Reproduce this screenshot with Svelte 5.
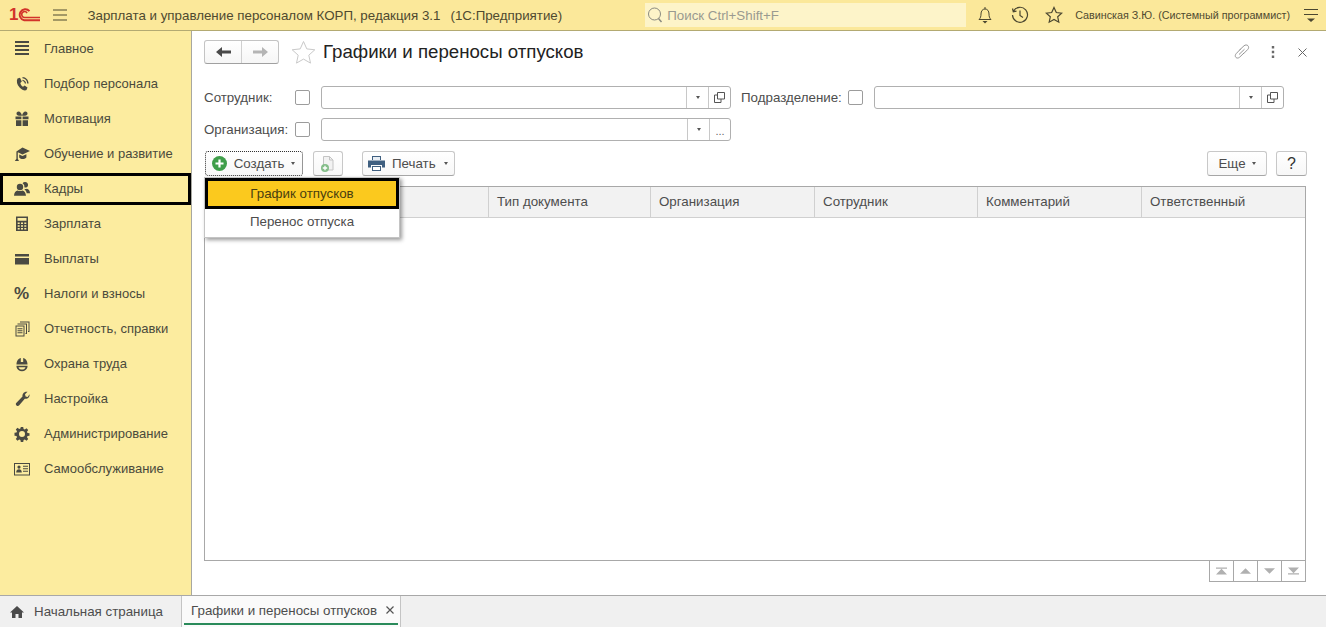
<script>
  const nav = [
    { label: 'Главное', d: 'M1 0h14v2H1zM1 4h14v2H1zM1 8h14v2H1zM1 12h14v2H1z' },
    { label: 'Подбор персонала', d: 'M3.500 2.500L6 1.700 7.800 5.400 6.300 6.900c.4 1.700 1.300 3 2.800 3.900L10.500 9.400l3 2.200-1 2.500c-1.600.9-4.300.2-6.900-2.500C2.900 8.800 2.200 5 3.500 2.500zM8.500 1c3.500.2 5.900 2.800 6.100 6.400h-1.400c-.2-2.900-2-4.900-4.700-5.100zM8.500 3.800c2 .2 3.400 1.700 3.600 3.800h-1.300c-.2-1.400-1-2.400-2.300-2.500z' },
    { label: 'Мотивация', d: 'M1.500 5.500h5.900v2.800H1.500zM8.600 5.500h5.900v2.800H8.600zM2 9.200h5.400V15H2zM8.600 9.200H14V15H8.600zM4.500.500C6.200.500 7.500 2.300 8 4.700c.5-2.400 1.800-4.200 3.500-4.200 1.400 0 2 1 2 2 0 1.300-1 2.200-2.500 2.200H5c-1.500 0-2.500-.9-2.500-2.200 0-1 .6-2 2-2z' },
    { label: 'Обучение и развитие', d: 'M8.500 1.500L16 5l-7.500 3.500L3.800 6.300v6.400L5 15H.8l1.600-2.300V5.500zM5.200 8.500l3.300 1.600 3.900-1.800v3.200c-2.300 2.100-5.200 2.100-7.200 0z' },
    { label: 'Кадры', d: 'M6 2.800a3.200 3.200 0 1 1 0 6.400 3.200 3.200 0 0 1 0-6.400zM11.200 1a2.800 2.800 0 1 1-.7 5.500 4.600 4.600 0 0 0-1.900-4.200A2.800 2.800 0 0 1 11.200 1zM0 14.800c0-3.200 1.800-5 3.700-5.300 1.500.8 3.100.8 4.600 0 1.900.3 3.500 2.100 3.700 5.300zM10 7.800c1 .3 1.900.2 2.900-.1 1.800.4 3.100 2 3.100 4.600h-3.300c-.4-2-1.300-3.400-2.700-4.500z' },
    { label: 'Зарплата', d: 'M2 .500h12V15H2zM3.500 2v2.800h9V2zM3.700 6.500v1.600h2V6.500zM7 6.500v1.600h2V6.500zM10.300 6.500v1.600h2V6.500zM3.700 9.200v1.600h2V9.200zM7 9.200v1.600h2V9.200zM10.300 9.200v1.600h2V9.200zM3.700 11.900v1.600h2v-1.600zM7 11.900v1.600h2v-1.600zM10.300 11.900v1.600h2v-1.600z' },
    { label: 'Выплаты', d: 'M1 3h14v2.600H1zM1 7h14v6.500H1z' },
    { label: 'Налоги и взносы', pct: true },
    { label: 'Отчетность, справки', d: 'M1.500 4.500h9V15.500h-9zM2.500 5.500v9h7v-9zM3.500 7.300h5v1h-5zM3.500 9.300h5v1h-5zM3.500 11.300h5v1h-5zM3.500 2.500h9.500v10.500h-1.500v-1h.5V3.500H3.500zM6 .500h9.500V11h-1.500v-1h.5V1.500H6z' },
    { label: 'Охрана труда', d: 'M2.500 8.500C2.500 4.800 4.500 2.300 6.800 1.900V6h2.400V1.900c2.300.4 4.300 2.900 4.300 6.600zM2.500 9.800h11V11c-.6 2.600-2.700 4.300-5.500 4.300S3.100 13.600 2.500 11zM4.500 11.200c.4 1.400 1.800 2.400 3.500 2.400s3.100-1 3.500-2.400z' },
    { label: 'Настройка', d: 'M15.500 3.200c.5 2.700-1.700 5-4.700 4.500L5 14.500c-1.400 1.500-4.200-.9-2.800-2.600L8.500 5.500C8 2.600 10.500.1 13.500.8L11 3.300l.6 2.200 2.100.4z' },
    { label: 'Администрирование', d: 'M6.800 1h2.400l.4 2 1.200.5 1.700-1.200 1.700 1.700-1.200 1.700.5 1.200 2 .4v2.400l-2 .4-.5 1.200 1.200 1.700-1.700 1.700-1.700-1.200-1.200.5-.4 2H6.800l-.4-2-1.200-.5-1.700 1.200-1.700-1.700 1.200-1.700-.5-1.200-2-.4V6.800l2-.4.5-1.200-1.200-1.700 1.700-1.700 1.700 1.200 1.200-.5zM8 5a3 3 0 1 0 0 6 3 3 0 0 0 0-6z' },
    { label: 'Самообслуживание', d: 'M0 2h16v12.500H0zM1 3v10.500h14V3zM5 4.500a1.600 1.600 0 1 1 0 3.200 1.600 1.600 0 0 1 0-3.200zM2.200 11.500c0-2 1.200-3.200 2.800-3.200s2.800 1.200 2.800 3.200zM9 4.800h5v1H9zM9 7.300h5v1H9zM9 9.800h5v1H9z' }
  ];
  const cols = ['', 'Тип документа', 'Организация', 'Сотрудник', 'Комментарий', 'Ответственный'];
</script>

<div class="app">
  <header class="top">
    <span class="logo1">1</span>
    <svg class="logo" width="22" height="16" viewBox="0 0 23 16">
      <path d="M12 4A5.800 5.800 0 1 0 6.500 13.500H23" fill="none" stroke="#d2332a" stroke-width="2" />
      <path d="M9.500 6A3 3 0 1 0 7 10.500H23" fill="none" stroke="#d2332a" stroke-width="1.600" />
    </svg>
    <svg class="burger" width="14" height="12" viewBox="0 0 14 12"><path d="M0 1h14M0 6h14M0 11h14" stroke="#4f4a30" fill="none" /></svg>
    <span class="apptitle">Зарплата и управление персоналом КОРП, редакция 3.1</span>
    <span class="appname">(1С:Предприятие)</span>
    <div class="search">
      <svg width="16" height="18" viewBox="0 0 16 18"><circle cx="7.500" cy="8" r="6" fill="none" stroke="#8a8a80" /><path d="M11.500 12.500l3 3.500" stroke="#8a8a80" stroke-width="1.500" /></svg>
      <span>Поиск Ctrl+Shift+F</span>
    </div>
    <svg class="tool bell" width="16" height="18" viewBox="0 0 16 18"><path d="M2 13.500c1.500-1.500 2-3 2-5.500 0-3 1.500-5 4-5s4 2 4 5c0 2.500.5 4 2 5.500zM8 1v2" fill="none" stroke="#4a4630" /><path d="M5.500 15h5L8 17.500z" fill="#4a4630" /></svg>
    <svg class="tool hist" width="18" height="18" viewBox="0 0 18 18"><path d="M2.500 5A7.500 7.500 0 1 1 1.500 9M1.500 2.500l.8 3.200 3.200-.6M9 4.500V9.500l3 2" fill="none" stroke="#4a4630" stroke-width="1.200" /></svg>
    <svg class="tool fav" width="18" height="18" viewBox="0 0 18 18"><path d="M9 1.500l2.300 5 5.400.6-4 3.700 1.100 5.400L9 13.500l-4.800 2.700 1.100-5.400-4-3.700 5.400-.6z" fill="none" stroke="#4a4630" stroke-width="1.200" /></svg>
    <span class="user">Савинская З.Ю. (Системный программист)</span>
    <svg class="usermenu" width="14" height="16" viewBox="0 0 14 16"><path d="M0 2.500h14M0 7.500h14" stroke="#4a4630" /><path d="M3 11.500h8L7 15z" fill="#4a4630" /></svg>
  </header>

  <div class="middle">
    <nav class="side">
      {#each nav as n}
        <div class="item" class:current={n.label === 'Кадры'}>
          <span class="ico">
            {#if n.pct}
              <span class="pct">%</span>
            {:else}
              <svg width="16" height="16" viewBox="0 0 16 16"><path d={n.d} fill="#4a4a42" fill-rule="evenodd" /></svg>
            {/if}
          </span>
          <span>{n.label}</span>
        </div>
      {/each}
    </nav>

    <main class="content">
      <div class="titlebar">
        <div class="navbtns">
          <span class="nb">
            <svg width="15" height="10" viewBox="0 0 15 10"><path d="M0 5l6-5v3.500h9v3H6V10z" fill="#4a4a4a" /></svg>
          </span>
          <span class="nb">
            <svg width="15" height="10" viewBox="0 0 15 10"><path d="M15 5L9 0v3.500H0v3h9V10z" fill="#b5b5b5" /></svg>
          </span>
        </div>
        <svg class="star" width="25" height="25" viewBox="0 0 25 25"><path d="M12.500 1.500l3.300 7.400 8 .9-6 5.400 1.700 7.900-7-4-7 4 1.700-7.900-6-5.400 8-.9z" fill="none" stroke="#c9c9c9" /></svg>
        <h1>Графики и переносы отпусков</h1>
        <div class="winbtns">
          <svg class="link" width="16" height="16" viewBox="0 0 16 16"><path d="M5.500 6L10 1.800c1.300-1.200 3.200-1 4 0 .9 1 .8 2.600-.3 3.700L9.200 10M10.500 5.200L5 10.500M6.800 4.800L2.300 9.500c-1.300 1.300-1.300 3-.4 3.900.9.900 2.500.9 3.700-.2L10 9" fill="none" stroke="#8c8c8c" stroke-width=".9" /></svg>
          <svg class="dots" width="4" height="12" viewBox="0 0 4 12"><path d="M.8 0h2.400v2.400H.8zM.8 4.800h2.400v2.400H.8zM.8 9.600h2.400V12H.8z" fill="#6a6a6a" /></svg>
          <svg class="closex" width="9" height="9" viewBox="0 0 9 9"><path d="M.5.500l8 8M8.500.500l-8 8" stroke="#666" /></svg>
        </div>
      </div>

      <div class="frow r1">
        <span class="lab w91">Сотрудник:</span>
        <span class="check"></span>
        <div class="field">
          <span class="fill"></span>
          <span class="fbtn"><i class="tri"></i></span>
          <span class="fbtn">
            <svg width="11" height="11" viewBox="0 0 11 11"><path d="M3.500.500h7v6.500h-7zM3.500 3H.500v7.500h6.500V7" fill="none" stroke="#555" /></svg>
          </span>
        </div>
        <span class="lab sub">Подразделение:</span>
        <span class="check c2"></span>
        <div class="field">
          <span class="fill"></span>
          <span class="fbtn"><i class="tri"></i></span>
          <span class="fbtn">
            <svg width="11" height="11" viewBox="0 0 11 11"><path d="M3.500.500h7v6.500h-7zM3.500 3H.500v7.500h6.500V7" fill="none" stroke="#555" /></svg>
          </span>
        </div>
      </div>

      <div class="frow r2">
        <span class="lab w91">Организация:</span>
        <span class="check"></span>
        <div class="field">
          <span class="fill"></span>
          <span class="fbtn"><i class="tri"></i></span>
          <span class="fbtn dotsbtn">...</span>
        </div>
      </div>

      <div class="toolbar">
        <div class="btn create">
          <svg width="15" height="15" viewBox="0 0 15 15"><circle cx="7.500" cy="7.500" r="7.500" fill="#3f9e4a" /><path d="M7.500 3.500v8M3.500 7.500h8" stroke="#fff" stroke-width="2.200" /></svg>
          <span>Создать</span>
          <i class="tri"></i>
        </div>
        <div class="btn copy">
          <svg width="16" height="18" viewBox="0 0 16 18"><path d="M3.500 1.500h6l3.500 3.500v10h-9.500z" fill="#f2f2f2" stroke="#c4c4c4" /><path d="M9.500 1.500V5H13" fill="none" stroke="#c4c4c4" /><circle cx="5" cy="13" r="4" fill="#83bd88" /><path d="M5 10.800v4.400M2.800 13h4.400" stroke="#fff" stroke-width="1.300" /></svg>
        </div>
        <div class="btn print">
          <svg width="17" height="15" viewBox="0 0 17 15"><path d="M4 0h9v4H4zM0 4.500h17v7h-3V9H3v2.500H0zM4 10h9v5H4z" fill="#3f5f80" /><path d="M5 11h7v3H5z" fill="#fff" /><path d="M5 1h7v3H5z" fill="#e8eef4" /></svg>
          <span>Печать</span>
          <i class="tri"></i>
        </div>
        <span class="spacer"></span>
        <div class="btn more"><span>Еще</span><i class="tri"></i></div>
        <div class="btn help">?</div>
      </div>

      <div class="tablewrap">
        <div class="table">
          <div class="thead">
            {#each cols as c}
              <div class="th">{c}</div>
            {/each}
          </div>
        </div>
        <div class="popup">
          <div class="pi sel">График отпусков</div>
          <div class="pi">Перенос отпуска</div>
        </div>
      </div>

      <div class="pager">
        <span class="pg"><svg width="11" height="8" viewBox="0 0 14 9"><path d="M0 0h14v1.500H0zM7 1.500L14 9H0z" fill="#b0b0b0" /></svg></span>
        <span class="pg"><svg width="11" height="6" viewBox="0 0 14 7"><path d="M7 0l7 7H0z" fill="#b0b0b0" /></svg></span>
        <span class="pg"><svg width="11" height="6" viewBox="0 0 14 7"><path d="M7 7l7-7H0z" fill="#b0b0b0" /></svg></span>
        <span class="pg"><svg width="11" height="8" viewBox="0 0 14 9"><path d="M0 9h14V7.500H0zM7 7.500L14 0H0z" fill="#b0b0b0" /></svg></span>
      </div>
    </main>
  </div>

  <footer class="tabs">
    <div class="home">
      <svg width="14" height="12" viewBox="0 0 14 12"><path d="M7 0l7 6.500h-2V12H8.500V8h-3v4H2V6.500H0z" fill="#4a4a4a" /></svg>
      <span>Начальная страница</span>
    </div>
    <div class="tab">
      <span>Графики и переносы отпусков</span>
      <svg width="8" height="8" viewBox="0 0 8 8"><path d="M.5.500l7 7M7.500.500l-7 7" stroke="#555" stroke-width="1.200" /></svg>
    </div>
  </footer>
</div>

<style>
  :global(body) { margin: 0; background: #fff; }
  .app {
    width: 1326px; height: 627px; overflow: hidden;
    display: flex; flex-direction: column;
    font-family: "Liberation Sans", Arial, sans-serif; font-size: 13.330px; color: #4d4d4d;
  }
  .top {
    height: 30px; flex: none; box-sizing: content-box;
    display: flex; align-items: center;
    background: #fbe89a; border-bottom: 1px solid #b3aa72;
    color: #4f4a30;
  }
  .logo1 { flex: none; margin-left: 9px; font-weight: bold; font-size: 17px; color: #d2332a; line-height: 18px; }
  .logo { flex: none; }
  .burger { margin-left: 13px; flex: none; }
  .apptitle { margin-left: 20px; white-space: nowrap; }
  .appname { margin-left: 10px; white-space: nowrap; }
  .search {
    margin-left: 83px; width: 321px; height: 24px; flex: none;
    background: #fdf4c9; display: flex; align-items: center; gap: 4px; padding-left: 2px;
    box-sizing: border-box; color: #9a9a90;
  }
  .tool { flex: none; }
  .bell { margin-left: 11px; }
  .hist { margin-left: 18px; }
  .fav { margin-left: 16px; }
  .user { margin-left: 12px; font-size: 10.750px; white-space: nowrap; }
  .usermenu { margin-left: 14px; flex: none; }

  .middle { flex: 1; display: flex; min-height: 0; }
  .side {
    width: 191px; flex: none; box-sizing: content-box;
    background: #fcec9f; border-right: 1px solid #a8a8a0;
    color: #4a4a3c; font-size: 13px;
  }
  .item {
    height: 35px; display: flex; align-items: center; box-sizing: border-box;
    padding-left: 14px; position: relative;
  }
  .item.current::after {
    content: ""; position: absolute; left: 0; right: 0; top: 2px; bottom: 1px;
    border: 3px solid #000;
  }
  .ico { width: 30px; flex: none; display: flex; align-items: center; }
  .pct { font-weight: bold; font-size: 17px; color: #4a4a42; line-height: 16px; }

  .content { flex: 1; min-width: 0; display: flex; flex-direction: column; padding: 9px 20px 0 12px; }
  .titlebar { height: 24px; display: flex; align-items: center; flex: none; }
  .navbtns {
    display: flex; width: 75px; height: 24px; box-sizing: border-box;
    border: 1px solid #c4c4c4; border-bottom-color: #a0a0a0; border-radius: 3px;
    background: linear-gradient(#fff, #f6f6f6); flex: none;
  }
  .nb { flex: 1; display: flex; align-items: center; justify-content: center; }
  .nb + .nb { border-left: 1px solid #d0d0d0; }
  .star { margin-left: 12px; flex: none; }
  h1 { margin: 0 0 0 7px; font-size: 18.670px; font-weight: normal; color: #222; white-space: nowrap; }
  .winbtns { margin-left: auto; display: flex; align-items: center; margin-right: -1px; }
  .winbtns .dots { margin-left: 21px; }
  .winbtns .closex { margin-left: 23px; }

  .frow { display: flex; align-items: center; height: 23px; flex: none; }
  .r1 { margin-top: 22px; }
  .r2 { margin-top: 9px; }
  .lab { white-space: nowrap; }
  .w91 { width: 91px; flex: none; }
  .check {
    width: 13px; height: 13px; flex: none; background: #fff;
    border: 1px solid #9c9c9c; border-radius: 2px; margin-right: 11px;
  }
  .field {
    width: 410px; height: 23px; flex: none; box-sizing: border-box; display: flex;
    border: 1px solid #b0b0b0; border-radius: 3px; background: #fff;
  }
  .fill { flex: 1; }
  .fbtn { width: 21px; display: flex; align-items: center; justify-content: center; border-left: 1px solid #c8c8c8; flex: none; }
  .dotsbtn { color: #666; font-size: 11px; padding-top: 3px; box-sizing: border-box; }
  .sub { margin-left: 10px; width: 107px; flex: none; }
  .c2 { margin-right: 11px; }
  .tri {
    display: inline-block; width: 0; height: 0; flex: none;
    border-left: 2.500px solid transparent; border-right: 2.500px solid transparent; border-top: 3px solid #555;
  }

  .toolbar { display: flex; height: 25px; flex: none; margin-top: 10px; padding-left: 1px; margin-right: -1px; }
  .btn {
    height: 25px; box-sizing: border-box; display: flex; align-items: center; justify-content: center;
    border: 1px solid #c8c8c8; border-bottom-color: #a6a6a6; border-radius: 3px;
    background: linear-gradient(#fff, #f7f7f7); color: #4d4d4d; flex: none;
  }
  .create { width: 98px; border: 1px dotted #333; gap: 7px; padding-right: 1px; }
  .copy { width: 30px; margin-left: 10px; }
  .print { width: 93px; margin-left: 19px; gap: 7px; justify-content: flex-start; padding-left: 5px; }
  .print .tri { margin-left: 1px; }
  .spacer { flex: 1; }
  .more { width: 60px; gap: 6px; }
  .help { width: 31px; margin-left: 9px; color: #333; font-size: 16px; }

  .tablewrap { position: relative; margin-top: 10px; height: 375px; flex: none; width: 1102px; }
  .table { height: 375px; box-sizing: border-box; border: 1px solid #a8a8a8; background: #fff; }
  .thead { height: 30px; display: grid; grid-template-columns: 283px 162px 164px 163px 164px 1fr; background: #f2f2f2; border-bottom: 1px solid #d0d0d0; }
  .th { border-left: 1px solid #d0d0d0; padding-left: 8px; line-height: 30px; color: #4d4d4d; white-space: nowrap; }
  .th:first-child { border-left: 0; }
  .popup {
    position: absolute; left: 0; top: -9px; width: 196px; height: 61px; box-sizing: border-box;
    background: #fff; border: 1px solid #c4c4c4;
    box-shadow: 2px 2px 4px rgba(0,0,0,.4);
  }
  .pi { height: 26px; line-height: 26px; text-align: center; color: #4d4d4d; }
  .pi.sel { height: 31px; line-height: 25px; box-sizing: border-box; background: #fbc91e; border: 3px solid #000; color: #4a3f10; }
  .pager { display: flex; justify-content: flex-end; width: 1102px; flex: none; }
  .pg { width: 24px; height: 21px; box-sizing: border-box; display: flex; align-items: center; justify-content: center; border: 1px solid #a8a8a8; border-top: 0; border-left: 0; }
  .pg:first-child { border-left: 1px solid #a8a8a8; width: 25px; }

  .tabs {
    height: 32px; flex: none; box-sizing: border-box; display: flex;
    background: #f0f0f0; border-top: 1px solid #a8a8a8;
  }
  .home { width: 181px; flex: none; box-sizing: border-box; padding-left: 10px; display: flex; align-items: center; gap: 10px; }
  .tab {
    width: 220px; flex: none; box-sizing: border-box; background: #fafafa;
    border-left: 1px solid #c4c4c4; border-right: 1px solid #c4c4c4;
    display: flex; align-items: center; padding: 0 6px 3px 9px; justify-content: space-between;
    position: relative; white-space: nowrap;
  }
  .tab::after { content: ""; position: absolute; left: 2px; right: 2px; bottom: 2px; height: 2px; background: #2a8a5a; }
</style>
